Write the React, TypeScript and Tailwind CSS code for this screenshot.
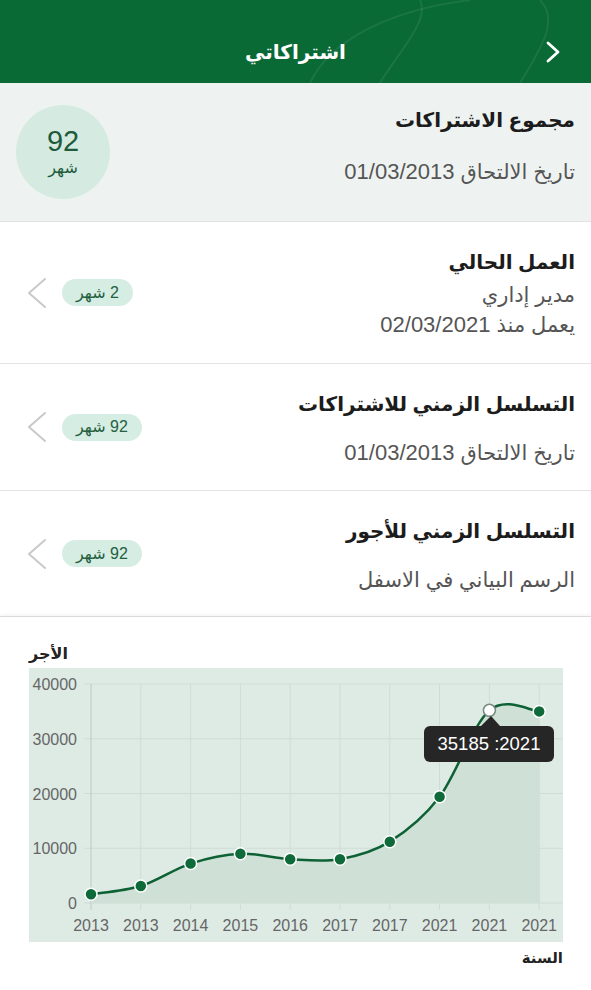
import React from 'react'

const font = { fontFamily: '"Liberation Sans", "DejaVu Sans", sans-serif' }

const years = ['2013', '2013', '2014', '2015', '2016', '2017', '2017', '2021', '2021', '2021']
const values = [1600, 3100, 7200, 9000, 8000, 8000, 11200, 19400, 35185, 35000]

const px = (i: number) => 62 + i * 49.8
const py = (v: number) => 235 - (v * 219) / 40000

function curvePath() {
  const pts = values.map((v, i) => [px(i), py(v)])
  let d = `M${pts[0][0]},${pts[0][1]}`
  for (let i = 0; i < pts.length - 1; i++) {
    const p0 = pts[Math.max(i - 1, 0)]
    const p1 = pts[i]
    const p2 = pts[i + 1]
    const p3 = pts[Math.min(i + 2, pts.length - 1)]
    const c1x = p1[0] + (p2[0] - p0[0]) / 6
    const c1y = p1[1] + (p2[1] - p0[1]) / 6
    const c2x = p2[0] - (p3[0] - p1[0]) / 6
    const c2y = p2[1] - (p3[1] - p1[1]) / 6
    d += ` C${c1x},${c1y} ${c2x},${c2y} ${p2[0]},${p2[1]}`
  }
  return d
}

function Chevron() {
  return (
    <svg width="20" height="32" viewBox="0 0 20 32" fill="none" stroke="#c9c9c9" strokeWidth="2" strokeLinecap="round" strokeLinejoin="round">
      <polyline points="18,2 2,16 18,30" />
    </svg>
  )
}

function Badge({ text }: { text: string }) {
  return (
    <span className="h-[27px] px-[14px] rounded-full bg-[#d6ede3] text-[#24603f] text-[16px] flex items-center whitespace-nowrap">
      {text}
    </span>
  )
}

// Arabic label with an optional date shown in slightly larger, spaced digits
function Line({ label, date }: { label: string; date?: string }) {
  return (
    <div className="text-[21px] text-[#555] leading-[30px]">
      {label}
      {date && <span className="text-[22px] tracking-[1px]"> {date}</span>}
    </div>
  )
}

type L = { label: string; date?: string }

function Row({ title, lines, badge, height, gap }: { title: string; lines: L[]; badge: string; height: string; gap: string }) {
  return (
    <div className={`flex items-center ${height} pr-[16px] pl-[27px] border-b border-[#e3e5e4] bg-white`}>
      <div className="flex-1 flex flex-col self-start pt-[25px]">
        <div className="text-[20px] font-bold text-[#1c1c1c] leading-[30px]">{title}</div>
        <div className={`flex flex-col ${gap}`}>
          {lines.map((l) => (
            <Line key={l.label} label={l.label} date={l.date} />
          ))}
        </div>
      </div>
      <div className="flex items-center gap-[15px]">
        <Badge text={badge} />
        <Chevron />
      </div>
    </div>
  )
}

function Chart() {
  const d = curvePath()
  const area = `${d} L${px(values.length - 1)},235 L${px(0)},235 Z`
  const ticks = [0, 10000, 20000, 30000, 40000]
  return (
    <svg width="534" height="274" viewBox="0 0 534 274" style={font}>
      <rect x="0" y="0" width="534" height="274" fill="#deebe5" />
      {ticks.map((t) => (
        <line key={t} x1="55" x2="534" y1={py(t)} y2={py(t)} stroke="#cfdcd5" strokeWidth="1" />
      ))}
      {years.map((_, i) => (
        <line key={i} x1={px(i)} x2={px(i)} y1="16" y2="242" stroke={i === 0 ? '#bccac2' : '#cfdcd5'} strokeWidth="1" />
      ))}
      <path d={area} fill="#cfe0d6" />
      <path d={d} fill="none" stroke="#0d6134" strokeWidth="2.5" />
      {values.map((v, i) => (
        <circle key={i} cx={px(i)} cy={py(v)} r="6" fill={i === 8 ? '#ffffff' : '#0f6a3a'} stroke={i === 8 ? '#7a8a80' : '#ffffff'} strokeWidth="1.5" />
      ))}
      {ticks.map((t) => (
        <text key={t} x="48" y={py(t) + 6} textAnchor="end" fontSize="16" fill="#666">{t}</text>
      ))}
      {years.map((yr, i) => (
        <text key={i} x={px(i)} y="263" textAnchor="middle" fontSize="16" fill="#666">{yr}</text>
      ))}
      <rect x="395" y="58" width="130" height="36" rx="6" fill="#262626" />
      <polygon points="452,58 471,58 462,48" fill="#262626" />
      <text x="460" y="82" textAnchor="middle" fontSize="18.5" fill="#ffffff">35185 :2021</text>
    </svg>
  )
}

export default function App() {
  return (
    <div dir="rtl" className="w-[591px] min-h-[990px] bg-white overflow-hidden" style={font}>
      {/* Header */}
      <div className="relative h-[83px] bg-[#0a6a36] overflow-hidden">
        <svg className="absolute inset-0" width="591" height="83" viewBox="0 0 591 83" fill="none" stroke="#ffffff" strokeOpacity="0.07" strokeWidth="2">
          <path d="M310,83 C330,40 390,10 470,0" />
          <path d="M380,83 C400,50 430,20 420,0" />
          <path d="M520,83 C540,50 560,20 540,0" />
        </svg>
        <div className="relative grid grid-cols-[70px_1fr_70px] items-center h-full pt-[21px]">
          <div className="flex justify-center pr-[6px]">
            <svg width="16" height="22" viewBox="0 0 16 22" fill="none" stroke="#ffffff" strokeWidth="2.8" strokeLinecap="round" strokeLinejoin="round">
              <polyline points="3,2 13,11 3,20" />
            </svg>
          </div>
          <div className="text-center text-white text-[20px] font-bold">اشتراكاتي</div>
          <div />
        </div>
      </div>

      {/* Summary */}
      <div className="flex items-center justify-between h-[139px] bg-[#eef3f1] pr-[16px] pl-[16px] border-b border-[#dfe3e1]">
        <div className="flex flex-col self-start pt-[22px]">
          <div className="text-[20px] font-bold text-[#1c1c1c] leading-[30px]">مجموع الاشتراكات</div>
          <div className="mt-[22px]">
            <Line label="تاريخ الالتحاق" date="01/03/2013" />
          </div>
        </div>
        <div className="w-[94px] h-[94px] rounded-full bg-[#d5ebe1] flex flex-col items-center justify-center text-[#1f5a3b]">
          <div className="text-[29px] leading-[32px]">92</div>
          <div className="text-[16px] leading-[22px]">شهر</div>
        </div>
      </div>

      <Row
        title="العمل الحالي"
        lines={[{ label: 'مدير إداري' }, { label: 'يعمل منذ', date: '02/03/2021' }]}
        badge="2 شهر"
        height="h-[142px]"
        gap="mt-[3px]"
      />
      <Row
        title="التسلسل الزمني للاشتراكات"
        lines={[{ label: 'تاريخ الالتحاق', date: '01/03/2013' }]}
        badge="92 شهر"
        height="h-[127px]"
        gap="mt-[19px]"
      />
      <Row
        title="التسلسل الزمني للأجور"
        lines={[{ label: 'الرسم البياني في الاسفل' }]}
        badge="92 شهر"
        height="h-[126px]"
        gap="mt-[19px]"
      />

      {/* Chart */}
      <div dir="ltr" className="bg-white shadow-[0_-2px_4px_rgba(0,0,0,0.06)] pt-[26px] pl-[29px] pb-[30px]">
        <div dir="rtl" className="text-left text-[16px] font-bold text-[#222] leading-[22px] mb-[3px] w-[40px]">الأجر</div>
        <Chart />
        <div className="w-[534px] text-right text-[15px] font-bold text-[#222] leading-[22px] mt-[5px]">السنة</div>
      </div>
    </div>
  )
}
